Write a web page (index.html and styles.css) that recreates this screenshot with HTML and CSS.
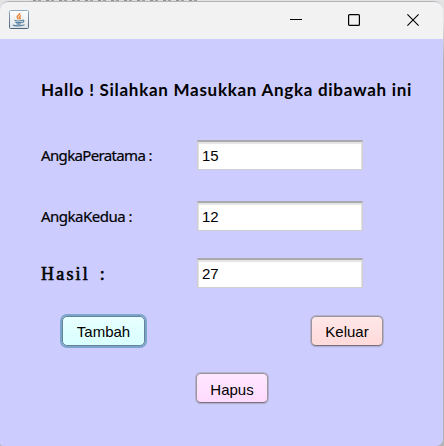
FILE: index.html
```html
<!DOCTYPE html>
<html lang="id">
<head>
<meta charset="utf-8">
<title>Kalkulator</title>
<link rel="stylesheet" href="styles.css">
</head>
<body>
<div class="window">
  <header class="titlebar">
    <svg class="app-icon" width="20" height="19" viewBox="0 0 20 19">
      <defs><linearGradient id="g" x1="0" y1="0" x2="0" y2="1"><stop offset="0" stop-color="#fff"/><stop offset="1" stop-color="#dfe3e8"/></linearGradient>
      <linearGradient id="b" x1="0" y1="0" x2="0" y2="1"><stop offset="0" stop-color="#8fa9bf"/><stop offset="1" stop-color="#4c6378"/></linearGradient></defs>
      <rect x=".5" y=".5" width="19" height="18" rx="1" fill="url(#g)" stroke="url(#b)"/>
      <path d="M10.800 3c.8 1.600-3.300 2.400-2.600 4.200.3.700.9 1.200 1.300 1.900M12 5.600c-1.800.6-1.700 1.500-1 2.300.4.500.1 1-.5 1.400" fill="none" stroke="#ee8438" stroke-width="1.500"/>
      <path d="M5.500 10.300c2 .7 6 .7 8 0M6.200 12c2 .7 4.800.7 6.800 0M7.300 13.700c1.500.5 3.500.5 4.800 0M13.300 10.300c2-.7 2.300 1.500-.3 2.300M4 15c1.500 1.200 9.500 1.200 11.500-.4" fill="none" stroke="#56809e" stroke-width="1.200"/>
    </svg>
    <nav class="controls">
      <svg width="12" height="12" viewBox="0 0 12 12"><path d="M0 5.500h12" stroke="#000"/></svg>
      <svg width="12" height="12" viewBox="0 0 12 12"><rect x=".6" y=".6" width="10.800" height="10.800" rx="1" fill="none" stroke="#000" stroke-width="1.200"/></svg>
      <svg width="12" height="12" viewBox="0 0 12 12"><path d="M.4.400l11.200 11.200M11.600.400L.4 11.600" stroke="#000" stroke-width="1.100"/></svg>
    </nav>
  </header>
  <main class="content">
    <h1 class="heading">Hallo ! Silahkan Masukkan Angka dibawah ini</h1>
    <div class="row first"><label class="label peratama" for="a">AngkaPeratama :</label><input class="field" id="a" value="15"></div>
    <div class="row second"><label class="label" for="b2">AngkaKedua :</label><input class="field" id="b2" value="12"></div>
    <div class="row third"><label class="label result" for="c">Hasil :</label><input class="field" id="c" value="27"></div>
    <div class="actions">
      <button class="button add">Tambah</button>
      <button class="button exit">Keluar</button>
    </div>
    <div class="clear-row"><button class="button clear">Hapus</button></div>
  </main>
</div>
</body>
</html>
```
FILE: styles.css
```css
* { box-sizing: border-box; }
body { margin: 0; height: 446px; padding-top: 1px; overflow: hidden; background: repeating-linear-gradient(90deg, #dedede 0 5px, #928f8c 5px 8px, #d3d8dd 8px 10px, #a59c94 10px 13px) 28px 0 / 170px 1px no-repeat, linear-gradient(#e3e3e3 20px, #b4b4b4 60px); }
.window { width: 443px; height: 445px; border-top: 1px solid #b4b4b4; border-radius: 9px 9px 7px 3px; overflow: hidden; background: #ccccff; }
.titlebar { height: 37px; background: #f2f2f2; display: flex; align-items: flex-start; justify-content: space-between; padding: 8px 24px 0 9px; }
.app-icon, .controls svg { display: block; }
.controls { display: flex; gap: 46px; padding-top: 4px; }
.controls svg:last-child { margin-left: 1px; }
.content { height: 407px; padding: 39px 0 0 41px; color: #000; }
.heading { margin: 0; height: 24px; font: 700 17px/24px Lato, sans-serif; letter-spacing: 0.720px; white-space: nowrap; }
.row { display: flex; align-items: center; height: 30px; }
.first { margin-top: 38px; }
.second { margin-top: 31px; }
.third { margin-top: 27px; }
.label { width: 156px; font: 15px/20px "Noto Sans", sans-serif; letter-spacing: -0.500px; white-space: nowrap; -webkit-text-stroke: 0.200px #000; }
.peratama { letter-spacing: -0.650px; }
.result { padding-top: 2px; font: 400 18px/20px "Liberation Serif", serif; letter-spacing: 2.200px; word-spacing: 3px; -webkit-text-stroke: 0.600px #000; }
.field { width: 166px; height: 30px; margin: 0; padding: 0 3px 0 4px; border: 1px solid #cfcfd1; border-top: 2px solid #aaaaac; border-radius: 0; outline: none; background: #fff; box-shadow: inset 0 2px 1px #e4e4e4, inset -1px 0 #e4e4e4, inset 1px 0 #e4e4e4; font: 15px "Liberation Sans", sans-serif; color: #000; }
.actions { display: flex; justify-content: space-between; align-items: center; height: 34px; margin: 26px 60px 0 20px; }
.button { width: 72px; height: 30px; margin: 0; padding: 2px 0 0; border: 1px solid #9a949f; border-bottom-color: #77717f; border-radius: 5px; box-shadow: 0 0 0 1px #b5b0cc, 0 1px 1px #8f8b9f; font: 15px "Liberation Sans", sans-serif; color: #000; }
.add { width: 83px; height: 30px; margin-left: 1px; padding-top: 1px; border: 1px solid #648299; background: linear-gradient(#e7ffff, #d9ffff); box-shadow: 0 0 0 2px #7ca5ca; border-radius: 5px; }
.exit { padding-top: 1px; background: linear-gradient(#ffe7e7, #ffdada); }
.clear { background: linear-gradient(#ffe7ff, #ffdaff); }
.clear-row { margin: 25px 0 0 155px; }
```
